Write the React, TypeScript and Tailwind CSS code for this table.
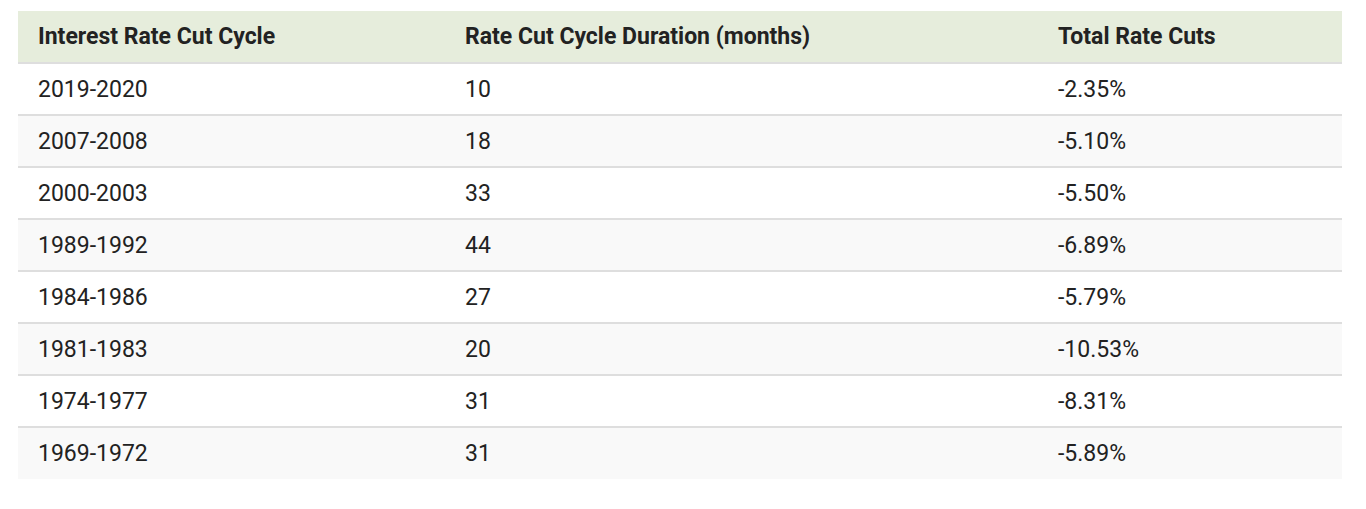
const rows = [
  ["2019-2020", "10", "-2.35%"],
  ["2007-2008", "18", "-5.10%"],
  ["2000-2003", "33", "-5.50%"],
  ["1989-1992", "44", "-6.89%"],
  ["1984-1986", "27", "-5.79%"],
  ["1981-1983", "20", "-10.53%"],
  ["1974-1977", "31", "-8.31%"],
  ["1969-1972", "31", "-5.89%"],
];

export default function App() {
  return (
    <div className="min-h-[509px] bg-white px-[18px] pt-[11px] font-['Roboto',sans-serif] text-[23px] text-[#222]">
      <table className="w-[1324px] table-fixed border-collapse text-left">
        <colgroup>
          <col className="w-[427px]" />
          <col className="w-[593px]" />
          <col className="w-[304px]" />
        </colgroup>
        <thead>
          <tr className="h-[52px] border-b-2 border-[#dedede] bg-[#e6eddc]">
            <th className="px-5 pt-[2px] font-bold">Interest Rate Cut Cycle</th>
            <th className="px-5 pt-[2px] font-bold">Rate Cut Cycle Duration (months)</th>
            <th className="px-5 pt-[2px] font-bold">Total Rate Cuts</th>
          </tr>
        </thead>
        <tbody>
          {rows.map((r, i) => (
            <tr
              key={r[0]}
              className={`h-[52px] ${i < rows.length - 1 ? "border-b-2 border-[#dedede]" : ""} ${i % 2 === 1 ? "bg-[#f9f9f9]" : "bg-white"}`}
            >
              {r.map((c, j) => (
                <td key={j} className="px-5 pt-[2px] font-normal">
                  {c}
                </td>
              ))}
            </tr>
          ))}
        </tbody>
      </table>
    </div>
  );
}
